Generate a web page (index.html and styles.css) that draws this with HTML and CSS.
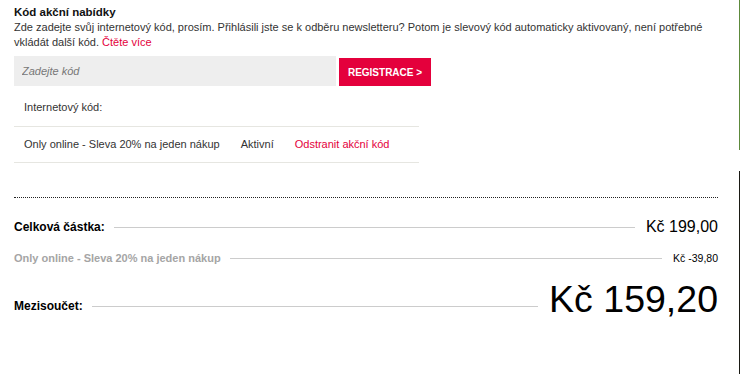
FILE: index.html
```html
<!DOCTYPE html>
<html lang="cs">
<head>
<meta charset="utf-8">
<title>Kód akční nabídky</title>
<link rel="stylesheet" href="styles.css">
</head>
<body>
<div class="page">
  <main class="content">
    <section class="promo">
      <h2 class="promo-title">Kód akční nabídky</h2>
      <p class="promo-text">Zde zadejte svůj internetový kód, prosím. Přihlásili jste se k odběru newsletteru? Potom je slevový kód automaticky aktivovaný, není potřebné vkládát další kód. <a class="link" href="#">Čtěte více</a></p>
      <form class="promo-form">
        <input class="promo-input" type="text" placeholder="Zadejte kód">
        <button class="promo-button" type="button">REGISTRACE &gt;</button>
      </form>
      <div class="code-table">
        <div class="code-head">Internetový kód:</div>
        <div class="code-row">
          <span>Only online - Sleva 20% na jeden nákup</span>
          <span>Aktivní</span>
          <a class="link" href="#">Odstranit akční kód</a>
        </div>
      </div>
    </section>
    <section class="totals">
      <div class="total-row total-row--main">
        <span class="total-label">Celková částka:</span>
        <span class="total-rule"></span>
        <span class="total-value">Kč 199,00</span>
      </div>
      <div class="total-row total-row--discount">
        <span class="total-label total-label--muted">Only online - Sleva 20% na jeden nákup</span>
        <span class="total-rule"></span>
        <span class="total-value total-value--small">Kč -39,80</span>
      </div>
      <div class="total-row total-row--sub">
        <span class="total-label">Mezisoučet:</span>
        <span class="total-rule"></span>
        <span class="total-value total-value--big">Kč 159,20</span>
      </div>
    </section>
  </main>
  <div class="edge">
    <span class="edge-top"></span>
    <span class="edge-bottom"></span>
  </div>
</div>
</body>
</html>
```

FILE: styles.css
```css
* { box-sizing: border-box; }

html, body {
  margin: 0;
  padding: 0;
  background: #fff;
}

body {
  font-family: "Liberation Sans", Arial, sans-serif;
  font-size: 11px;
  line-height: 15px;
  color: #333;
}

.page {
  display: flex;
  width: 740px;
  height: 374px;
  overflow: hidden;
}

.content {
  flex: 1;
  padding: 5px 21px 0 14px;
}

.promo-title {
  margin: 0;
  font-size: 11.5px;
  line-height: 15px;
  font-weight: bold;
  color: #111;
}

.promo-text {
  margin: 0;
  width: 704px;
}

.link {
  color: #e4003c;
  text-decoration: none;
}

.promo-form {
  display: flex;
  align-items: flex-end;
  margin: 6px 0 0;
}

.promo-input {
  width: 322px;
  height: 30px;
  border: 0;
  margin: 0;
  padding: 0 8px;
  background: #eeeeee;
  font-family: inherit;
  font-size: 11px;
  color: #333;
  outline: none;
}

.promo-input::placeholder {
  color: #777;
  font-style: italic;
}

.promo-button {
  height: 28px;
  width: 92px;
  margin: 0 0 0 3px;
  border: 0;
  padding: 0;
  background: #e4003c;
  color: #fff;
  font-family: inherit;
  font-size: 10px;
  font-weight: bold;
  cursor: pointer;
}

.code-table {
  width: 405px;
}

.code-head {
  padding: 14px 10px 11px;
  border-bottom: 1px solid #e6e6e1;
}

.code-row {
  display: flex;
  gap: 21px;
  padding: 10px 10px 10px;
  border-bottom: 1px solid #e6e6e1;
  white-space: nowrap;
}

.totals {
  margin-top: 34px;
  padding-top: 19px;
  border-top: 1px dotted #222;
  width: 704px;
}

.total-row {
  display: flex;
  align-items: center;
}

.total-row--main {
  height: 20px;
}

.total-row--discount {
  height: 15px;
  margin-top: 14px;
}

.total-row--sub {
  margin-top: 14px;
}

.total-label {
  font-weight: bold;
  font-size: 12px;
  color: #000;
  white-space: nowrap;
}

.total-label--muted {
  font-size: 11px;
  color: #a5a5a5;
}

.total-rule {
  flex: 1;
  height: 1px;
  background: #cccccc;
  margin: 0 11px 0 9px;
}

.total-value {
  font-size: 16px;
  line-height: 20px;
  color: #000;
  white-space: nowrap;
}

.total-value--small {
  font-size: 10.5px;
  line-height: 15px;
}

.total-value--big {
  font-size: 37.5px;
  line-height: 38px;
  margin-bottom: 14px;
}

.edge {
  width: 1px;
  display: flex;
  flex-direction: column;
  gap: 21px;
}

.edge-top {
  height: 150px;
  background: #5d8a3c;
}

.edge-bottom {
  flex: 1;
  background: #1a1a14;
}
```
